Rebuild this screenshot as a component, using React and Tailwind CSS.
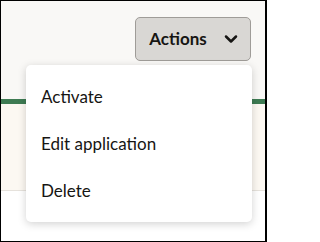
import React from 'react';
import { ChevronDown } from 'lucide-react';

const items = ['Activate', 'Edit application', 'Delete'];

export default function App() {
  return (
    <div className="relative w-[267px] h-[242px] overflow-hidden border border-r-2 border-black bg-white flex flex-col font-['Lato',sans-serif] text-[#161513]">
      {/* toolbar */}
      <div className="h-[98px] bg-[#f9f8f6] flex justify-end items-start pt-[16px] pr-[14px]">
        <button className="w-[116px] h-[44px] flex items-center justify-center gap-[14px] pl-[4px] bg-[#d9d7d4] border border-[#9f9c98] rounded-[5px] text-[17px] font-bold">
          Actions
          <ChevronDown className="w-[20px] h-[20px]" strokeWidth={3} />
        </button>
      </div>
      <div className="h-[5px] bg-[#3e7b53]" />
      <div className="h-[87px] bg-[#fcf8f2] border-b border-[#e6e2dc]" />
      <div className="flex-1 bg-white" />

      {/* dropdown */}
      <div className="absolute left-[25px] top-[64px] w-[226px] rounded-[5px] bg-white shadow-[0_2px_8px_rgba(0,0,0,0.18)] py-[8px]">
        {items.map((item) => (
          <div key={item} className="h-[47px] flex items-center px-[15px] text-[17px]">
            {item}
          </div>
        ))}
      </div>
    </div>
  );
}
